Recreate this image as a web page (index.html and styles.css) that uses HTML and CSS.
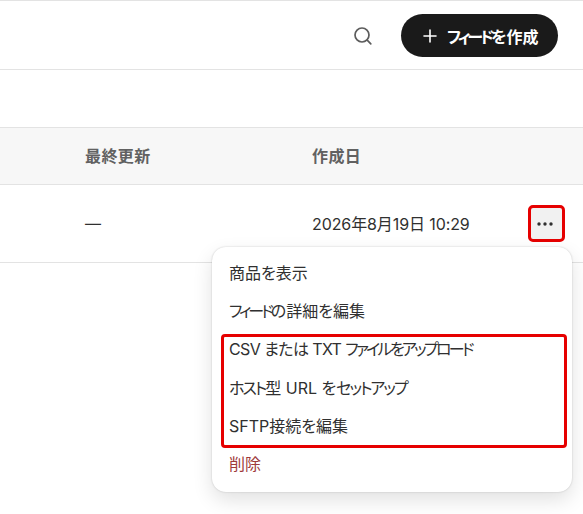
FILE: index.html
```html
<!DOCTYPE html>
<html lang="ja">
<head>
    <meta charset="UTF-8">
    <meta name="viewport" content="width=device-width, initial-scale=1.0">
    <title>フィード</title>
    <link rel="stylesheet" href="styles.css">
</head>
<body>
    <header class="topbar">
        <button class="search-button" aria-label="検索">
            <svg width="20" height="20" viewBox="0 0 20 20" fill="none" stroke="#5c5c5c" stroke-width="1.7" stroke-linecap="round">
                <circle cx="9" cy="9" r="7"/>
                <path d="M14.2 14.2l3.6 3.6"/>
            </svg>
        </button>
        <button class="create-button">
            <svg width="14" height="14" viewBox="0 0 14 14" fill="none" stroke="#fff" stroke-width="1.6" stroke-linecap="round">
                <path d="M7 1v12M1 7h12"/>
            </svg>
            <span><span class="kana-tight">フィード</span>を作成</span>
        </button>
    </header>

    <div class="spacer"></div>

    <div class="table-row table-head">
        <div class="cell-updated">最終更新</div>
        <div class="cell-created">作成日</div>
    </div>
    <div class="table-row table-body">
        <div class="cell-updated">—</div>
        <div class="cell-created">2026年8月19日 10:29</div>
        <button class="more-button" aria-label="その他">
            <svg width="16" height="4" viewBox="0 0 16 4" fill="#303030">
                <circle cx="2" cy="2" r="1.7"/>
                <circle cx="8" cy="2" r="1.7"/>
                <circle cx="14" cy="2" r="1.7"/>
            </svg>
        </button>
    </div>

    <div class="menu">
        <a class="menu-item">商品を表示</a>
        <a class="menu-item"><span class="kana-tight">フィード</span>の詳細を編集</a>
        <div class="menu-group">
            <a class="menu-item"><span class="latin-tight">CSV または TXT </span><span class="kana-file">ファイルをアップロード</span></a>
            <a class="menu-item"><span class="kana">ホスト</span>型 URL を<span class="kana">セットアップ</span></a>
            <a class="menu-item">SFTP接続を編集</a>
        </div>
        <a class="menu-item danger">削除</a>
    </div>
</body>
</html>
```

FILE: styles.css
```css
* {
    box-sizing: border-box;
}

html,
body {
    height: 100%;
}

body {
    margin: 0;
    position: relative;
    overflow: hidden;
    background-color: #fff;
    color: #303030;
    font-family: "Inter", "Noto Sans CJK JP", sans-serif;
    font-size: 16px;
    font-feature-settings: "palt";
}

button {
    border: none;
    padding: 0;
    cursor: pointer;
    font-family: inherit;
    font-feature-settings: inherit;
}

.kana {
    letter-spacing: -2px;
}

.kana-file {
    letter-spacing: -2.7px;
}

.kana-tight {
    letter-spacing: -3px;
}

.latin-tight {
    letter-spacing: -0.6px;
}

.topbar {
    height: 70px;
    padding: 1px 25px 0 0;
    display: flex;
    align-items: center;
    justify-content: flex-end;
    gap: 28px;
    border-top: 1px solid #e3e3e3;
    border-bottom: 1px solid #e3e3e3;
}

.search-button {
    display: flex;
    background: none;
}

.create-button {
    width: 157px;
    height: 43px;
    padding-left: 22px;
    display: flex;
    align-items: center;
    gap: 10px;
    background-color: #1a1a1a;
    color: #fff;
    border-radius: 22px;
    font-size: 16px;
    font-weight: 700;
}

.spacer {
    height: 57px;
}

.table-row {
    display: flex;
    align-items: center;
    padding-left: 85px;
    border-bottom: 1px solid #e3e3e3;
}

.table-head {
    height: 58px;
    background-color: #f7f7f7;
    border-top: 1px solid #e3e3e3;
    color: #616161;
    font-weight: 600;
    letter-spacing: 0.4px;
}

.table-body {
    height: 78px;
}

.cell-updated {
    width: 227px;
    padding-bottom: 2px;
}

.cell-created {
    width: 216px;
    padding-bottom: 2px;
    white-space: nowrap;
}

.table-body .cell-created {
    letter-spacing: -0.1px;
}

.more-button {
    width: 37px;
    height: 37px;
    padding-right: 3px;
    display: flex;
    align-items: center;
    justify-content: center;
    background-color: #f1f1f1;
    border: 3px solid #e60000;
    border-radius: 5px;
}

.menu {
    position: absolute;
    top: 247px;
    left: 212px;
    width: 360px;
    height: 245px;
    padding: 6.5px 0;
    background-color: #fff;
    border-radius: 14px;
    box-shadow: 0 0 2px rgba(0, 0, 0, 0.2), 0 8px 20px rgba(0, 0, 0, 0.12);
}

.menu-item {
    display: block;
    height: 38.4px;
    line-height: 38.4px;
    padding-left: 17px;
    font-size: 16px;
    color: #303030;
}

.menu-group {
    position: relative;
}

.menu-group::after {
    content: "";
    position: absolute;
    top: 4px;
    right: 5px;
    bottom: -3px;
    left: 9px;
    border: 3px solid #e60000;
    border-radius: 4px;
}

.danger {
    color: #9e3a3a;
}
```
